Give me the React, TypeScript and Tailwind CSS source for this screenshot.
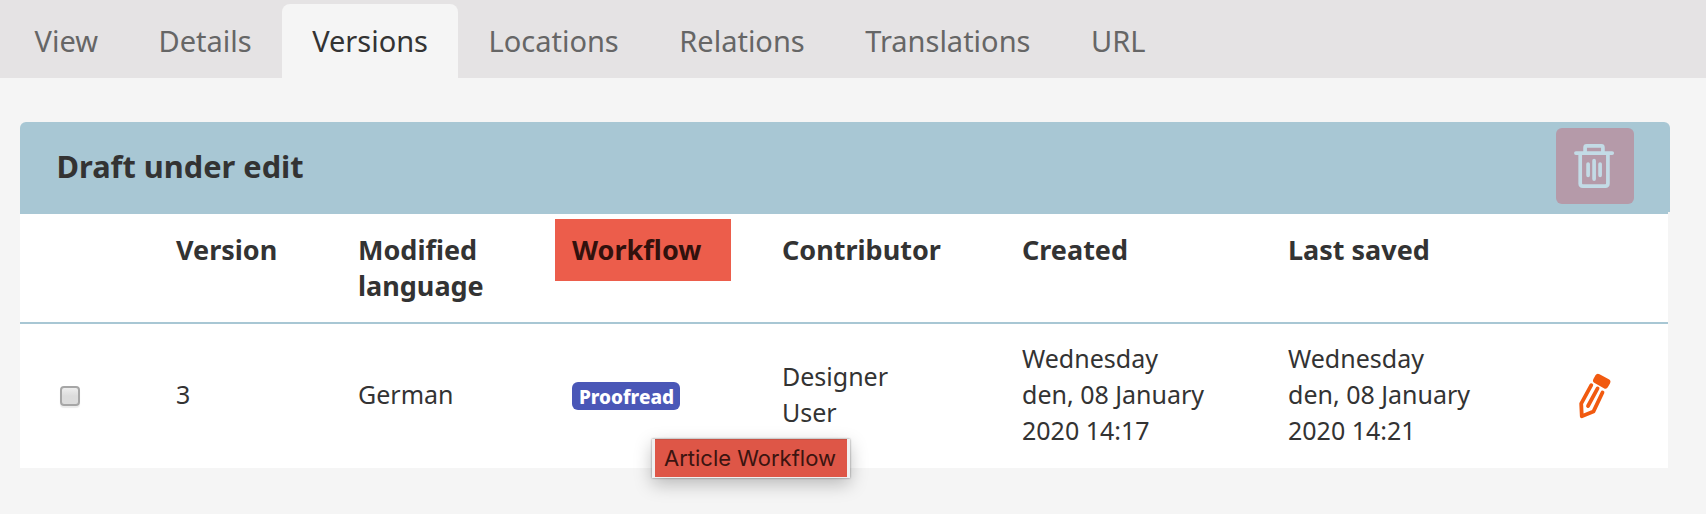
const tabs = ["View", "Details", "Versions", "Locations", "Relations", "Translations", "URL"];

const columns = ["", "Version", "Modified language", "Workflow", "Contributor", "Created", "Last saved", ""];

function TrashIcon() {
  return (
    <svg width="78" height="76" viewBox="0 0 78 76" fill="none" stroke="#c3dbe6" strokeWidth="3.7" strokeLinecap="round" strokeLinejoin="round">
      <path d="M19.9 25.1H56.2" />
      <path d="M29.1 24.5V19.4Q29.1 17.9 30.6 17.9H45.4Q46.9 17.9 46.9 19.4V24.5" />
      <path d="M24.2 26V55.5Q24.2 58.1 26.8 58.1H49.3Q51.9 58.1 51.9 55.5V26" />
      <path d="M32.1 36V47.3M38.1 32.7V51.1M44.1 36V47.3" />
    </svg>
  );
}

function PencilIcon() {
  return (
    <svg width="36" height="48" viewBox="0 0 36 48" fill="none" stroke="#f15a10" strokeWidth="3.8" strokeLinecap="round" strokeLinejoin="round">
      <rect x="15.4" y="4.1" width="16.6" height="10.2" rx="3" fill="#f15a10" stroke="none" transform="rotate(29 23.7 9.2)" />
      <path d="M13.3 13.2L3.2 31.7L3.8 44.3L15.4 39.6L24.5 20.5" />
      <path d="M19.6 16.4L10 34" />
    </svg>
  );
}

export default function App() {
  return (
    <div className="h-[514px] w-[1706px] overflow-hidden bg-[#f5f5f5] font-['Noto_Sans','Open_Sans',sans-serif] text-[#333]">
      <nav className="flex h-[78px] bg-[#e5e3e4] pt-1 pl-[4.3px]">
        {tabs.map((tab) => (
          <a
            key={tab}
            className={
              tab === "Versions"
                ? "flex h-[74px] items-center rounded-t-lg bg-[#f5f5f5] px-[30.25px] text-[29px] text-[#333]"
                : "flex h-[74px] items-center px-[30.25px] text-[29px] text-[#666]"
            }
          >
            {tab}
          </a>
        ))}
      </nav>

      <section className="mt-11 ml-5 w-[1650px]">
        <header className="flex h-[90px] items-start justify-between rounded-t-md bg-[#a8c7d4] pr-9 pl-[36.5px]">
          <h2 className="pt-[23px] text-[30.75px] leading-[42px] font-bold">Draft under edit</h2>
          <button className="mt-1.5 h-[76px] w-[78px] rounded-md bg-[#b59aa9]">
            <TrashIcon />
          </button>
        </header>

        <div className="w-[1648px] border-t-2 border-[#a8c7d4] bg-white">
          <div className="grid h-[110px] grid-cols-[156px_182px_214px_210px_240px_266px_290px_1fr] border-b-2 border-[#a8c7d4] text-[27px] leading-9 font-bold">
            {columns.map((label, i) =>
              label === "Workflow" ? (
                <div key={i} className="-ml-[17px] mt-[5px] h-[62px] w-[176px] bg-[#ec5d4b] pt-[13px] pl-[17px] text-[#31110d]">
                  {label}
                </div>
              ) : (
                <div key={i} className="w-40 pt-[18px]">{label}</div>
              ),
            )}
          </div>

          <div className="grid h-36 grid-cols-[156px_182px_214px_210px_240px_266px_290px_1fr] items-center pb-1 text-[25px] leading-9">
            <div className="pt-1 pl-10">
              <div className="size-5 rounded-[4px] border-2 border-[#a6a6a6] bg-linear-to-b from-[#eeeeee] to-[#dcdcdc] to-50% shadow-[0_2px_1px_rgba(0,0,0,0.08)]" />
            </div>
            <div>3</div>
            <div>German</div>
            <div className="flex pt-1">
              <span className="h-7 w-[108px] rounded-md bg-[#4a57b7] pl-px text-center text-[19px] leading-[31px] font-extrabold text-white">
                Proofread
              </span>
            </div>
            <div className="w-32">Designer User</div>
            <div>Wednesday<br />den, 08 January<br />2020 14:17</div>
            <div>Wednesday<br />den, 08 January<br />2020 14:21</div>
            <div className="pt-1">
              <PencilIcon />
            </div>
          </div>
        </div>
      </section>

      <div className="absolute top-[439px] left-[652px] h-[39px] w-[198px] bg-[#f0f0f0] px-[3px] shadow-[0_0_2px_rgba(0,0,0,0.45),0_6px_18px_rgba(0,0,0,0.25)]">
        <div className="h-[38px] border-t border-[#c65347] bg-[#de5647] pl-[9px] font-['Inter',sans-serif] text-[22px] leading-[36px] whitespace-nowrap text-[#3b1410]">
          Article Workflow
        </div>
      </div>
    </div>
  );
}
